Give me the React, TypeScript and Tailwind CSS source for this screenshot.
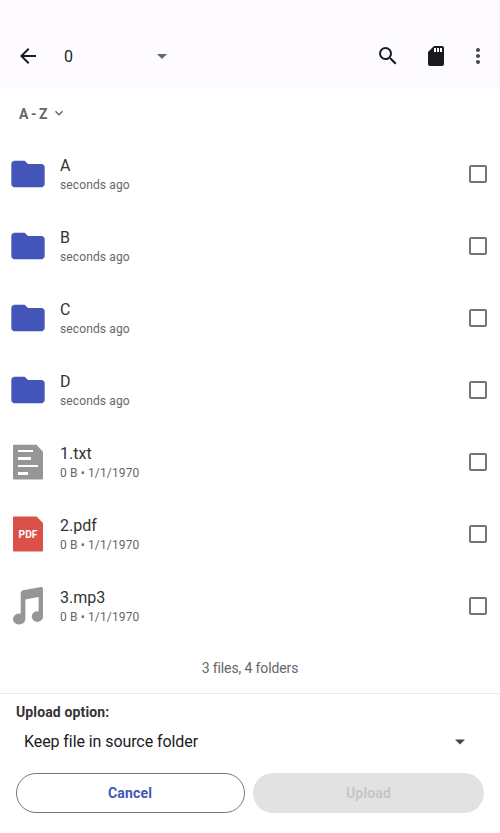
import type { ReactNode } from "react";

type Kind = "folder" | "txt" | "pdf" | "mp3";

const entries: { name: string; detail: string; kind: Kind }[] = [
  { name: "A", detail: "seconds ago", kind: "folder" },
  { name: "B", detail: "seconds ago", kind: "folder" },
  { name: "C", detail: "seconds ago", kind: "folder" },
  { name: "D", detail: "seconds ago", kind: "folder" },
  { name: "1.txt", detail: "0 B • 1/1/1970", kind: "txt" },
  { name: "2.pdf", detail: "0 B • 1/1/1970", kind: "pdf" },
  { name: "3.mp3", detail: "0 B • 1/1/1970", kind: "mp3" },
];

function Icon({ className, children }: { className: string; children: ReactNode }) {
  return (
    <svg viewBox="0 0 24 24" fill="currentColor" className={`shrink-0 ${className}`}>
      {children}
    </svg>
  );
}

function FileIcon({ kind }: { kind: Kind }) {
  if (kind === "folder") {
    return (
      <Icon className="size-10 text-[#4355b9]">
        <path d="M10 4H4c-1.1 0-1.99.9-1.99 2L2 18c0 1.1.9 2 2 2h16c1.1 0 2-.9 2-2V8c0-1.1-.9-2-2-2h-8l-2-2z" />
      </Icon>
    );
  }
  return (
    <svg viewBox="0 0 40 40" className="size-10 shrink-0">
      {kind === "txt" && (
        <>
          <path fill="#969696" d="M6 2.7h22.5l6.5 7V36.3a1.3 1.3 0 0 1-1.3 1.3H6.3A1.3 1.3 0 0 1 5 36.3V3.7a1 1 0 0 1 1-1z" />
          <path fill="#fff" d="M10 8h15v2H10zM10 15h13v3H10zM10 23h20v2H10zM10 30h10v3H10z" />
        </>
      )}
      {kind === "pdf" && (
        <>
          <path fill="#db5048" d="M6 2.5h22.5L35 9v27.5a1 1 0 0 1-1 1H6a1 1 0 0 1-1-1v-33a1 1 0 0 1 1-1z" />
          <text x="20" y="23.6" textAnchor="middle" fill="#fff" fontSize="10.2" fontWeight="700" fontFamily="Roboto, sans-serif">
            PDF
          </text>
        </>
      )}
      {kind === "mp3" && (
        <path
          fill="#969696"
          d="M15.2 4.2 33 1.1a1.8 1.8 0 0 1 2 1.8V29.6A5.7 5.3 0 1 1 30.6 25.4V11.1L17.4 13.4V33A6.2 5.5 0 1 1 12.7 27.7V7.2a3 3 0 0 1 2.5-3z"
        />
      )}
    </svg>
  );
}

export default function App() {
  return (
    <div className="flex h-[833px] w-[500px] flex-col overflow-hidden bg-white font-['Roboto',sans-serif] text-[#333]">
      <header className="flex h-[88px] items-end bg-[#fdfbff] pb-5 pl-4 text-[#1b1b1f]">
        <Icon className="size-6">
          <path d="M20 11H7.83l5.59-5.59L12 4l-8 8 8 8 1.41-1.41L7.83 13H20v-2z" />
        </Icon>
        <div className="ml-6 flex h-6 w-[110px] items-center justify-between">
          <span className="pt-0.5 text-base leading-6">0</span>
          <Icon className="size-6 text-[#666]">
            <path d="M7 10l5 5 5-5z" />
          </Icon>
        </div>
        <div className="ml-auto flex items-center pr-2.5">
          <Icon className="size-6">
            <path d="M15.5 14h-.79l-.28-.27A6.471 6.471 0 0 0 16 9.5 6.5 6.5 0 1 0 9.5 16c1.61 0 3.09-.59 4.23-1.57l.27.28v.79l5 4.99L20.49 19l-4.99-5zm-6 0C7.01 14 5 11.99 5 9.5S7.01 5 9.5 5 14 7.01 14 9.5 11.99 14 9.5 14z" />
          </Icon>
          <Icon className="ml-6 size-6">
            <path d="M18 2h-8L4.02 8 4 20c0 1.1.9 2 2 2h12c1.1 0 2-.9 2-2V4c0-1.1-.9-2-2-2zm-6 6h-2V4h2v4zm3 0h-2V4h2v4zm3 0h-2V4h2v4z" />
          </Icon>
          <Icon className="ml-[18px] size-6 text-[#46464f]">
            <path d="M12 8c1.1 0 2-.9 2-2s-.9-2-2-2-2 .9-2 2 .9 2 2 2zm0 2c-1.1 0-2 .9-2 2s.9 2 2 2 2-.9 2-2-.9-2-2-2zm0 6c-1.1 0-2 .9-2 2s.9 2 2 2 2-.9 2-2-.9-2-2-2z" />
          </Icon>
        </div>
      </header>

      <div className="flex h-[50px] items-center pb-px pl-[19px] pt-[3px] text-[#666]">
        <span className="w-8 whitespace-nowrap text-sm font-bold [word-spacing:-1px]">A - Z</span>
        <Icon className="mb-0.5 size-4">
          <path d="M16.59 8.59L12 13.17 7.41 8.59 6 10l6 6 6-6z" />
        </Icon>
      </div>

      <main>
        {entries.map((e) => (
          <div key={e.name} className="flex h-[72px] items-center pl-2 pr-[13px]">
            <FileIcon kind={e.kind} />
            <div className="ml-3 flex-1 pt-0.5">
              <div className="text-base leading-5">{e.name}</div>
              <div className="text-xs leading-[18px] tracking-[0.13px] text-[#666]">{e.detail}</div>
            </div>
            <div className="size-[18px] rounded-[2px] border-2 border-[#757575]" />
          </div>
        ))}
        <div className="flex h-[51px] items-center justify-center text-sm tracking-[-0.12px] text-[#666]">3 files, 4 folders</div>
      </main>

      <footer className="flex flex-col border-t border-[#e9e9e9] px-4 pt-2">
        <div className="text-sm font-bold leading-5 tracking-[0.13px]">Upload option:</div>
        <div className="flex h-10 items-center justify-between pl-2 pr-3 text-base text-[#1b1b1f]">
          <span className="tracking-[-0.08px]">Keep file in source folder</span>
          <Icon className="size-6 text-[#46464f]">
            <path d="M7 9.5l5 5 5-5z" />
          </Icon>
        </div>
        <div className="mt-[11px] flex h-10 gap-2 text-sm font-bold tracking-[0.16px]">
          <button className="w-[229px] rounded-full border border-[#777680] pr-px text-[#4355b9]">Cancel</button>
          <button className="w-[231px] rounded-full bg-[#e2e2e2] text-[#c7c7c8]">Upload</button>
        </div>
      </footer>
    </div>
  );
}
